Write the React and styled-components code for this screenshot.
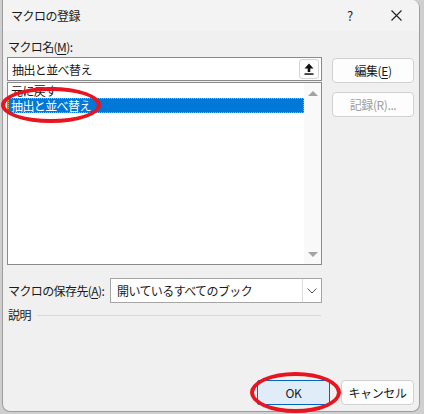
import React from "react";
import styled, { createGlobalStyle } from "styled-components";

const GlobalStyle = createGlobalStyle`
  html, body {
    margin: 0;
    padding: 0;
    background: #cfcfcf;
  }
  body {
    font-family: "Noto Sans CJK JP", "Noto Sans", sans-serif;
    font-size: 12px;
    color: #1a1a1a;
  }
`;

const Backdrop = styled.div`
  width: 424px;
  height: 414px;
  box-sizing: border-box;
  padding: 0 4px 2px 2px;
  position: relative;
  overflow: hidden;
`;

const Window = styled.div`
  height: 100%;
  box-sizing: border-box;
  border: 1px solid #9c9c9c;
  border-top: none;
  border-radius: 0 8px 8px 8px;
  background: #f0f0f0;
  display: flex;
  flex-direction: column;
  overflow: hidden;
`;

const TitleBar = styled.div`
  height: 31px;
  flex-shrink: 0;
  background: #f3f3f3;
  display: flex;
  align-items: center;
  padding-left: 8px;
`;

const Title = styled.div`
  flex: 1;
  letter-spacing: -0.5px;
`;

const TitleIcon = styled.div`
  width: 46px;
  height: 31px;
  display: flex;
  align-items: center;
  justify-content: center;
  font-size: 13px;
  color: #222;
`;

const Body = styled.div`
  flex: 1;
  display: flex;
  flex-direction: column;
  padding: 0 5px 6px 4px;
`;

const Main = styled.div`
  display: flex;
  gap: 10px;
`;

const LeftColumn = styled.div`
  width: 316px;
  display: flex;
  flex-direction: column;
`;

const RightColumn = styled.div`
  width: 82px;
  display: flex;
  flex-direction: column;
  gap: 9px;
  padding-top: 27px;
`;

const Label = styled.div`
  height: 14px;
  line-height: 14px;
  letter-spacing: -0.6px;
  white-space: nowrap;
  margin: ${(p) => p.$margin || "0"};
`;

const Key = styled.span`
  text-decoration: underline;
  text-underline-offset: 2px;
`;

const TextBox = styled.div`
  height: 24px;
  box-sizing: border-box;
  border: 1px solid #8a8a8a;
  background: #fff;
  display: flex;
  align-items: center;
  padding: 0 1px 0 4px;
`;

const BoxText = styled.div`
  flex: 1;
  letter-spacing: -0.6px;
  white-space: nowrap;
`;

const CollapseButton = styled.div`
  width: 20px;
  height: 20px;
  box-sizing: border-box;
  border: 1px solid #d4d4d4;
  border-radius: 3px;
  background: #fdfdfd;
  display: flex;
  align-items: center;
  justify-content: center;
  margin-right: 1px;
`;

const ListBox = styled.div`
  margin-top: 1px;
  height: 183px;
  box-sizing: border-box;
  border: 1px solid #8a8a8a;
  background: #fff;
  display: flex;
`;

const ListItems = styled.div`
  flex: 1;
  display: flex;
  flex-direction: column;
`;

const ListItem = styled.div`
  height: 15px;
  line-height: 15px;
  padding-left: 3px;
  letter-spacing: -0.6px;
  white-space: nowrap;
  overflow: hidden;
  box-sizing: border-box;
  background: ${(p) => (p.$selected ? "#0078d7" : "transparent")};
  color: ${(p) => (p.$selected ? "#fff" : "#1a1a1a")};
  outline: ${(p) => (p.$selected ? "1px dotted #f3a33a" : "none")};
  outline-offset: -1px;
`;

const ScrollBar = styled.div`
  width: 17px;
  background: #f9f9f9;
  display: flex;
  flex-direction: column;
  justify-content: space-between;
  align-items: center;
  padding: 8px 0 7px;
`;

const Arrow = styled.div`
  width: 0;
  height: 0;
  border-left: 5px solid transparent;
  border-right: 5px solid transparent;
  ${(p) =>
    p.$down
      ? "border-top: 5px solid #a3a3a3;"
      : "border-bottom: 5px solid #a3a3a3;"}
`;

const FieldRow = styled.div`
  display: flex;
  align-items: center;
  margin-top: 13px;
`;

const ComboBox = styled.div`
  margin-left: auto;
  width: 212px;
  height: 25px;
  box-sizing: border-box;
  border: 1px solid #a5a5a5;
  background: #fff;
  display: flex;
  align-items: center;
  padding: 0 0 0 6px;
`;

const DropButton = styled.div`
  width: 19px;
  height: 23px;
  box-sizing: border-box;
  border-left: 1px solid #dcdcdc;
  display: flex;
  align-items: center;
  justify-content: center;
`;

const SectionRow = styled.div`
  display: flex;
  align-items: center;
  gap: 6px;
  margin-top: 5px;
`;

const Rule = styled.div`
  flex: 1;
  height: 1px;
  background: #d8d8d8;
  margin-right: 1px;
`;

const Footer = styled.div`
  margin-top: auto;
  display: flex;
  justify-content: flex-end;
  gap: 11px;
`;

const Button = styled.div`
  width: ${(p) => p.$width || "73px"};
  height: 25px;
  box-sizing: border-box;
  border: 1px solid ${(p) => (p.$primary ? "#0067c0" : "#d0d0d0")};
  border-radius: ${(p) => (p.$primary ? "2px" : "4px")};
  background: ${(p) => (p.$primary ? "#e0edf8" : "#fdfdfd")};
  color: ${(p) => (p.$disabled ? "#9d9d9d" : "#1a1a1a")};
  display: flex;
  align-items: center;
  justify-content: center;
  letter-spacing: -0.4px;
  white-space: nowrap;
`;

const Circle = styled.div`
  position: absolute;
  box-sizing: border-box;
  border: 4px solid #e8141f;
  border-radius: 50%;
  left: ${(p) => p.$x}px;
  top: ${(p) => p.$y}px;
  width: ${(p) => p.$w}px;
  height: ${(p) => p.$h}px;
  pointer-events: none;
`;

function CloseIcon() {
  return (
    <svg width="11" height="11" viewBox="0 0 11 11">
      <path d="M0.5 0.5 L10.5 10.5 M10.5 0.5 L0.5 10.5" stroke="#222" strokeWidth="1.1" />
    </svg>
  );
}

function CollapseIcon() {
  return (
    <svg width="10" height="12" viewBox="0 0 10 12">
      <path d="M5 0.5 L9.5 5.5 L6.3 5.5 L6.3 9 L3.7 9 L3.7 5.5 L0.5 5.5 Z" fill="#111" />
      <rect x="0.5" y="10.3" width="9" height="1.5" fill="#111" />
    </svg>
  );
}

function ChevronIcon() {
  return (
    <svg width="10" height="6" viewBox="0 0 10 6">
      <path d="M0.5 0.5 L5 5 L9.5 0.5" fill="none" stroke="#555" strokeWidth="1" />
    </svg>
  );
}

export default function App() {
  return (
    <>
      <GlobalStyle />
      <Backdrop>
        <Window>
          <TitleBar>
            <Title>マクロの登録</Title>
            <TitleIcon>?</TitleIcon>
            <TitleIcon>
              <CloseIcon />
            </TitleIcon>
          </TitleBar>
          <Body>
            <Main>
              <LeftColumn>
                <Label $margin="9px 0 3px 1px">
                  マクロ名(<Key>M</Key>):
                </Label>
                <TextBox>
                  <BoxText>抽出と並べ替え</BoxText>
                  <CollapseButton>
                    <CollapseIcon />
                  </CollapseButton>
                </TextBox>
                <ListBox>
                  <ListItems>
                    <ListItem>元に戻す</ListItem>
                    <ListItem $selected>抽出と並べ替え</ListItem>
                  </ListItems>
                  <ScrollBar>
                    <Arrow />
                    <Arrow $down />
                  </ScrollBar>
                </ListBox>
                <FieldRow>
                  <Label $margin="0 0 0 1px">
                    マクロの保存先(<Key>A</Key>):
                  </Label>
                  <ComboBox>
                    <BoxText>開いているすべてのブック</BoxText>
                    <DropButton>
                      <ChevronIcon />
                    </DropButton>
                  </ComboBox>
                </FieldRow>
                <SectionRow>
                  <Label $margin="0 0 0 1px">説明</Label>
                  <Rule />
                </SectionRow>
              </LeftColumn>
              <RightColumn>
                <Button $width="82px">
                  編集(<Key>E</Key>)
                </Button>
                <Button $width="82px" $disabled>
                  記録(R)...
                </Button>
              </RightColumn>
            </Main>
            <Footer>
              <Button $primary>OK</Button>
              <Button>キャンセル</Button>
            </Footer>
          </Body>
        </Window>
        <Circle $x={1} $y={87} $w={100} $h={36} />
        <Circle $x={250} $y={372} $w={91} $h={41} />
      </Backdrop>
    </>
  );
}
